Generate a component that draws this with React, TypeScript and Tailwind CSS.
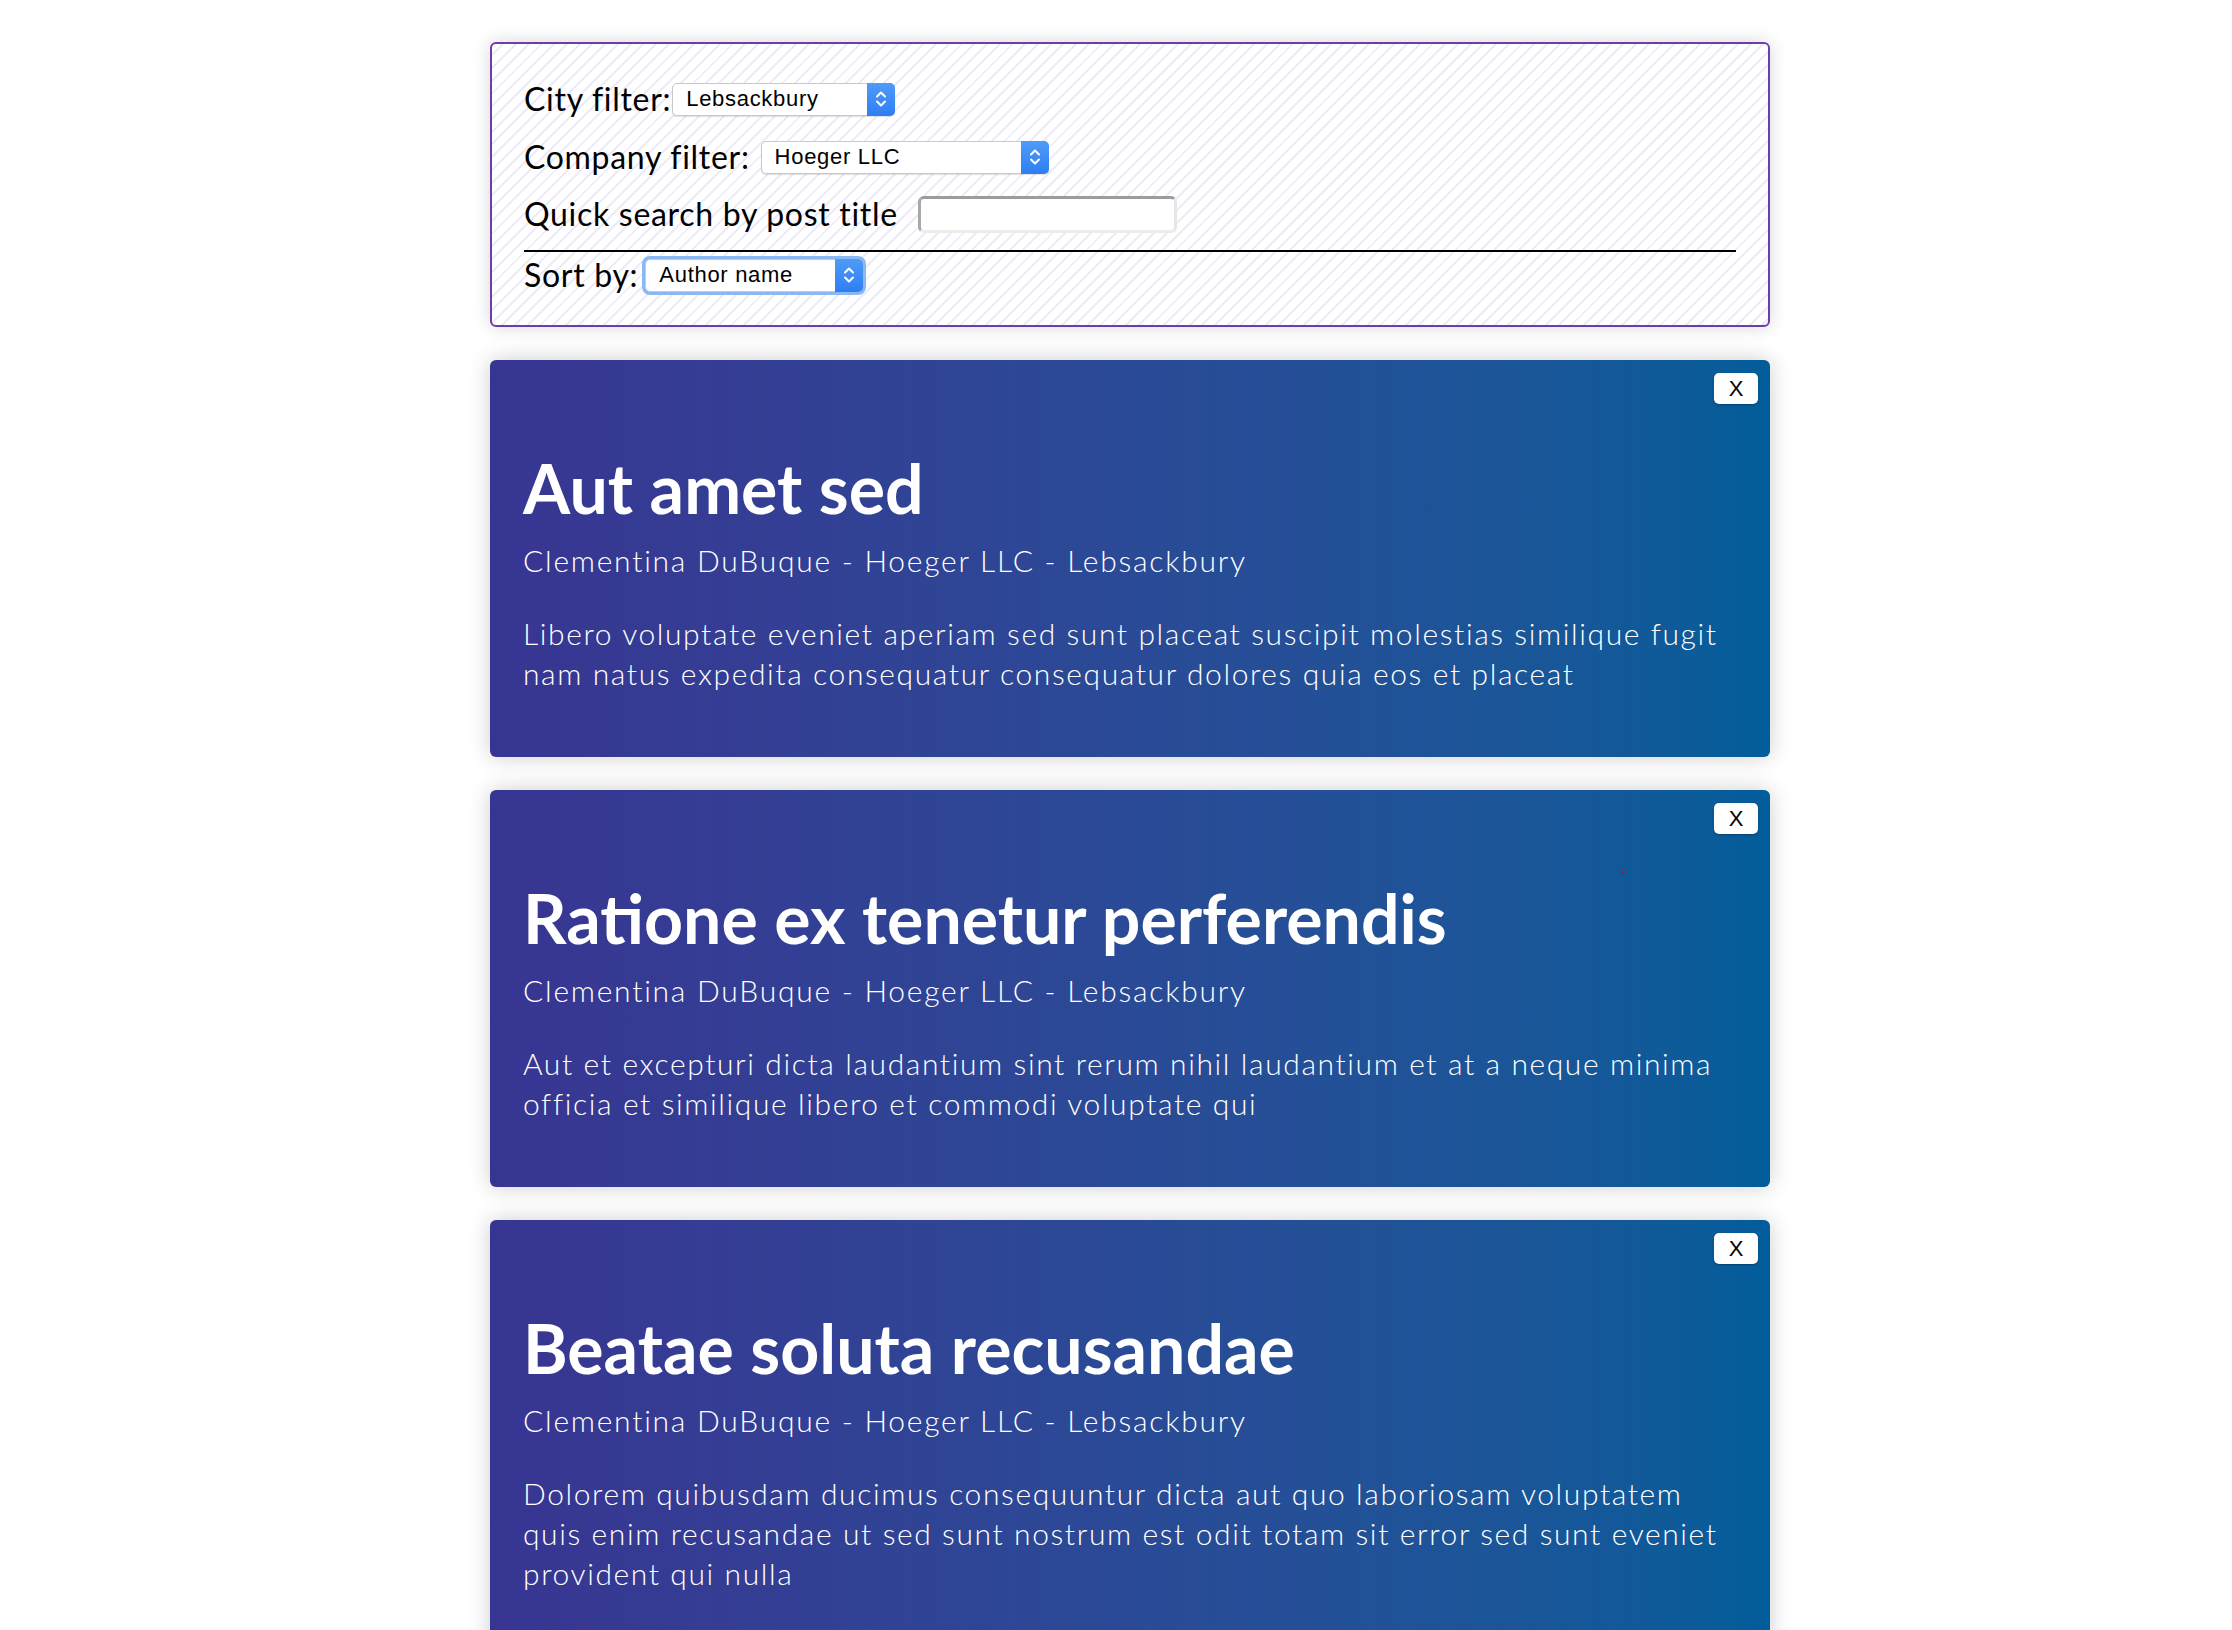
import React, { useState } from 'react';

interface Post {
  id: number;
  title: string;
  author: string;
  company: string;
  city: string;
  body: string[];
}

const posts: Post[] = [
  {
    id: 1,
    title: 'Aut amet sed',
    author: 'Clementina DuBuque',
    company: 'Hoeger LLC',
    city: 'Lebsackbury',
    body: [
      'Libero voluptate eveniet aperiam sed sunt placeat suscipit molestias similique fugit',
      'nam natus expedita consequatur consequatur dolores quia eos et placeat',
    ],
  },
  {
    id: 2,
    title: 'Ratione ex tenetur perferendis',
    author: 'Clementina DuBuque',
    company: 'Hoeger LLC',
    city: 'Lebsackbury',
    body: [
      'Aut et excepturi dicta laudantium sint rerum nihil laudantium et at a neque minima',
      'officia et similique libero et commodi voluptate qui',
    ],
  },
  {
    id: 3,
    title: 'Beatae soluta recusandae',
    author: 'Clementina DuBuque',
    company: 'Hoeger LLC',
    city: 'Lebsackbury',
    body: [
      'Dolorem quibusdam ducimus consequuntur dicta aut quo laboriosam voluptatem',
      'quis enim recusandae ut sed sunt nostrum est odit totam sit error sed sunt eveniet',
      'provident qui nulla',
    ],
  },
];

const Stepper: React.FC = () => (
  <span className="pointer-events-none absolute -right-px -top-px -bottom-px w-[28px] rounded-r-[5px] bg-gradient-to-b from-[#4f9bf8] to-[#2d7ef4] flex items-center justify-center">
    <svg width="14" height="22" viewBox="0 0 14 22" fill="none" stroke="white" strokeWidth="2" strokeLinecap="round" strokeLinejoin="round">
      <path d="M3 8.5 L7 4.5 L11 8.5" />
      <path d="M3 13.5 L7 17.5 L11 13.5" />
    </svg>
  </span>
);

interface MacSelectProps {
  value: string;
  options: string[];
  width: string;
  focused?: boolean;
  onChange: (v: string) => void;
}

// mac-style select: painted box with a transparent native select on top
const MacSelect: React.FC<MacSelectProps> = ({ value, options, width, focused, onChange }) => (
  <div
    className={`relative h-[33px] ${width} rounded-[5px] bg-white border border-[#c9c9c9] shadow-[0_1px_1px_rgba(0,0,0,0.12)] flex items-center ${
      focused ? 'ring-[3px] ring-[#8ab8f5]' : ''
    }`}
  >
    <span className="pl-[13px] text-[22px] leading-none text-black font-['Liberation_Sans',Arial,sans-serif]">
      {value}
    </span>
    <Stepper />
    <select
      value={value}
      onChange={e => onChange(e.target.value)}
      className="absolute inset-0 opacity-0 cursor-pointer"
    >
      {options.map(o => (
        <option key={o}>{o}</option>
      ))}
    </select>
  </div>
);

const App: React.FC = () => {
  const [city, setCity] = useState('Lebsackbury');
  const [company, setCompany] = useState('Hoeger LLC');
  const [sortBy, setSortBy] = useState('Author name');
  const [query, setQuery] = useState('');
  const [hidden, setHidden] = useState<number[]>([]);

  const visible = posts.filter(p => !hidden.includes(p.id));

  return (
    <div className="min-h-screen bg-white pt-[42px] pb-10 font-['Lato','Noto_Sans',sans-serif]">
      <div className="ml-[490px] w-[1280px] flex flex-col gap-[33px]">
        {/* Filters */}
        <div className="rounded-[6px] border-2 border-[#6e3cab] shadow-[0_0_18px_rgba(0,0,0,0.16)] bg-[repeating-linear-gradient(135deg,#ffffff_0px,#ffffff_7px,#eeebf8_7px,#eeebf8_9px)] px-[32px] pt-[35px] pb-[30px] text-black text-[32px] tracking-[0.7px]">
          <div className="flex items-center h-[40px] gap-[1px]">
            <span>City filter:</span>
            <MacSelect value={city} options={['Lebsackbury']} width="w-[223px]" onChange={setCity} />
          </div>
          <div className="flex items-center h-[40px] gap-[11px] mt-[18px]">
            <span>Company filter:</span>
            <MacSelect value={company} options={['Hoeger LLC']} width="w-[288px]" onChange={setCompany} />
          </div>
          <div className="flex items-center h-[40px] gap-[20px] mt-[17px]">
            <span>Quick search by post title</span>
            <input
              value={query}
              onChange={e => setQuery(e.target.value)}
              className="w-[259px] h-[37px] rounded-[6px] bg-white border-[3px] border-t-[#9c9c9c] border-l-[#a8a8a8] border-r-[#e6e6e6] border-b-[#ececec] outline-none px-2 text-[20px]"
            />
          </div>
          <div className="h-[2px] bg-black mt-[16px]" />
          <div className="flex items-center h-[40px] gap-[7px] mt-[3px]">
            <span>Sort by:</span>
            <MacSelect value={sortBy} options={['Author name']} width="w-[218px]" focused onChange={setSortBy} />
          </div>
        </div>

        {/* Posts */}
        {visible.map(post => (
          <div
            key={post.id}
            className="relative rounded-[6px] bg-gradient-to-r from-[#383592] to-[#025d9a] shadow-[0_0_22px_rgba(0,0,0,0.2)] px-[33px] pt-[88px] pb-[64px] text-white"
          >
            <button
              onClick={() => setHidden(h => [...h, post.id])}
              className="absolute top-[13px] right-[12px] w-[44px] h-[31px] rounded-[5px] bg-white text-black text-[22px] leading-none shadow-[0_1px_2px_rgba(0,0,0,0.3)] flex items-center justify-center font-['Liberation_Sans',Arial,sans-serif]"
            >
              X
            </button>
            {post.id === 2 && (
              <span className="absolute left-[1131px] top-[81px] w-[3px] h-[3px] rounded-full bg-[#e0001a]" />
            )}
            <h2 className="text-[68px] leading-[80px] font-bold">{post.title}</h2>
            <p className="mt-[12px] text-[30px] leading-[40px] font-light tracking-[1.75px]">
              {post.author} - {post.company} - {post.city}
            </p>
            <p className="mt-[33px] text-[30px] leading-[40px] font-light tracking-[1.6px]">
              {post.body.map((line, i) => (
                <React.Fragment key={i}>
                  {line}
                  {i < post.body.length - 1 && <br />}
                </React.Fragment>
              ))}
            </p>
          </div>
        ))}
      </div>
    </div>
  );
};

export default App;
